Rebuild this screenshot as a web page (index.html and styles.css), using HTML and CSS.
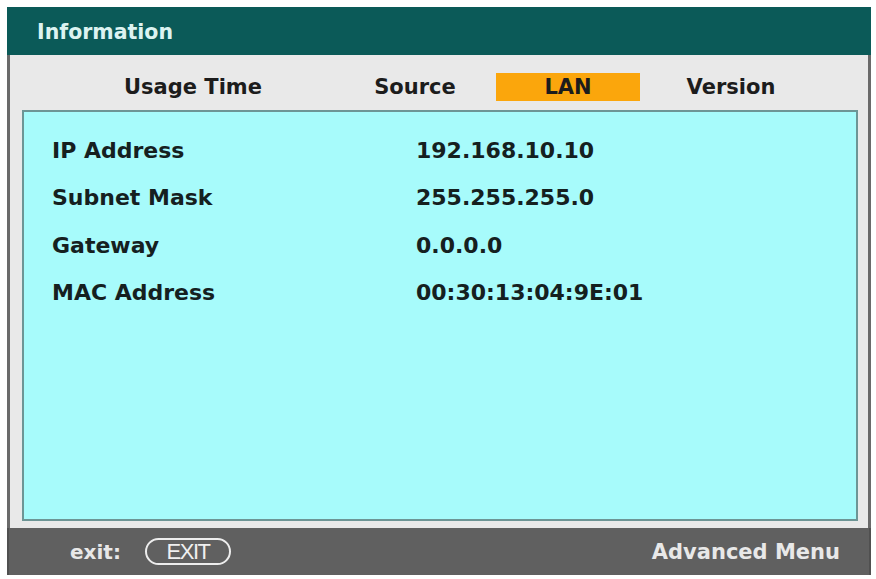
FILE: index.html
```html
<!DOCTYPE html>
<html>
<head>
<meta charset="utf-8">
<link rel="stylesheet" href="styles.css">
</head>
<body>
<div class="window">
  <div class="titlebar">Information</div>
  <div class="panel">
    <div class="tabs">
      <div class="tab tab-usage">Usage Time</div>
      <div class="tab tab-source">Source</div>
      <div class="tab tab-lan active">LAN</div>
      <div class="tab tab-version">Version</div>
    </div>
    <div class="content">
      <div class="row"><span class="label">IP Address</span><span class="value">192.168.10.10</span></div>
      <div class="row"><span class="label">Subnet Mask</span><span class="value">255.255.255.0</span></div>
      <div class="row"><span class="label">Gateway</span><span class="value">0.0.0.0</span></div>
      <div class="row"><span class="label">MAC Address</span><span class="value">00:30:13:04:9E:01</span></div>
    </div>
  </div>
  <div class="footer">
    <div class="exit">
      <span class="exit-label">exit:</span>
      <span class="exit-key">EXIT</span>
    </div>
    <div class="advanced">Advanced Menu</div>
  </div>
</div>
</body>
</html>
```

FILE: styles.css
```css
html, body {
  margin: 0;
  padding: 0;
  background: #ffffff;
}

body {
  font-family: "DejaVu Sans", "Liberation Sans", sans-serif;
  font-weight: bold;
}

.window {
  margin: 7px 0 0 7px;
  width: 864px;
  height: 568px;
  display: flex;
  flex-direction: column;
}

.titlebar {
  height: 48px;
  flex: none;
  background: #0b5a58;
  color: #dcf3f1;
  font-size: 20.5px;
  display: flex;
  align-items: center;
  padding-left: 30px;
  padding-top: 2px;
  box-sizing: border-box;
}

.panel {
  flex: 1;
  background: #e9e9e9;
  border-left: 3px solid #6a6a6a;
  border-right: 3px solid #6a6a6a;
  padding: 0 10px 7px 12px;
  display: flex;
  flex-direction: column;
  min-height: 0;
}

.tabs {
  height: 55px;
  flex: none;
  box-sizing: border-box;
  padding-top: 18px;
  display: flex;
  align-items: flex-start;
}

.tab {
  height: 28px;
  line-height: 29px;
  text-align: center;
  font-size: 21px;
  color: #1c1c1c;
}

.tab-usage { width: 342px; }
.tab-source { width: 102px; }
.tab-lan { width: 144px; margin-left: 30px; }
.tab-version { width: 182px; }

.tab.active {
  background: #fba60c;
}

.content {
  flex: 1;
  background: #a7fbfb;
  border: 2px solid #6d9595;
  padding: 15px 0 0 28px;
}

.row {
  display: flex;
  height: 47.3px;
  line-height: 47px;
  font-size: 22px;
  color: #15201f;
}

.label {
  width: 364px;
}

.footer {
  height: 47px;
  flex: none;
  background: #606060;
  border-left: 2px solid #505050;
  border-right: 2px solid #505050;
  display: flex;
  align-items: center;
  justify-content: space-between;
  padding: 0 29px 0 61px;
  color: #e8e8e8;
}

.exit {
  display: flex;
  align-items: center;
}

.exit-label {
  font-size: 20px;
  width: 75px;
}

.exit-key {
  display: inline-block;
  width: 82px;
  height: 23px;
  border: 2px solid #ededed;
  border-radius: 14px;
  text-align: center;
  line-height: 24px;
  font-family: "Liberation Sans", sans-serif;
  font-weight: normal;
  font-size: 22px;
  letter-spacing: -1.5px;
  color: #f0f0f0;
}

.advanced {
  font-size: 21px;
}
```
